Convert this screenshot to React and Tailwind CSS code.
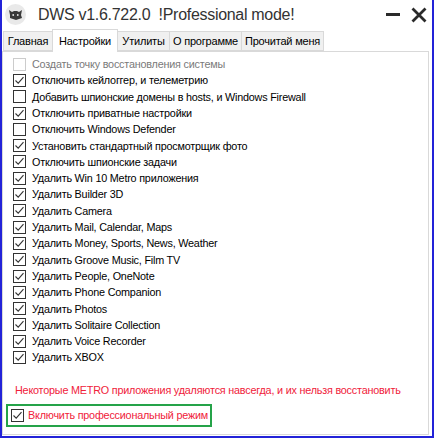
import React from 'react';

const items = [
  { label: 'Создать точку восстановления системы', checked: false, disabled: true },
  { label: 'Отключить кейлоггер, и телеметрию', checked: true },
  { label: 'Добавить шпионские домены в hosts, и Windows Firewall', checked: false },
  { label: 'Отключить приватные настройки', checked: true },
  { label: 'Отключить Windows Defender', checked: false },
  { label: 'Установить стандартный просмотрщик фото', checked: true },
  { label: 'Отключить шпионские задачи', checked: true },
  { label: 'Удалить Win 10 Metro приложения', checked: true },
  { label: 'Удалить Builder 3D', checked: true },
  { label: 'Удалить Camera', checked: true },
  { label: 'Удалить Mail, Calendar, Maps', checked: true },
  { label: 'Удалить Money, Sports, News, Weather', checked: true },
  { label: 'Удалить Groove Music, Film TV', checked: true },
  { label: 'Удалить People, OneNote', checked: true },
  { label: 'Удалить Phone Companion', checked: true },
  { label: 'Удалить Photos', checked: true },
  { label: 'Удалить Solitaire Collection', checked: true },
  { label: 'Удалить Voice Recorder', checked: true },
  { label: 'Удалить XBOX', checked: true },
];

const tabs = [
  { name: 'Главная', w: 'w-[50px]' },
  { name: 'Настройки', w: 'w-[66px]' },
  { name: 'Утилиты', w: 'w-[53px]' },
  { name: 'О программе', w: 'w-[73px]' },
  { name: 'Прочитай меня', w: 'w-[83px]' },
];

const Box = ({ checked, disabled }) => (
  <div
    className={`w-[13px] h-[13px] border flex items-center justify-center bg-white shrink-0 ${
      disabled ? 'border-[#cccccc]' : 'border-[#333333]'
    }`}
  >
    {checked && (
      <svg width="11" height="11" viewBox="0 0 11 11">
        <path d="M1.5 5.5 L4.2 8.2 L9.5 2.2" fill="none" stroke="#333" strokeWidth="1.1" />
      </svg>
    )}
  </div>
);

const Logo = () => (
  <div className="w-[21px] h-[21px] rounded-full bg-[#e9e9e9] flex items-center justify-center">
    <svg width="15" height="13" viewBox="0 0 15 13">
      <path d="M1 2 L4 4 L6 3 L9 3 L11 4 L14 2 L13 7 L14 10 L11 11 L8 12 L5 11 L2 10 L2 7 Z" fill="#3a3a3a" />
      <circle cx="5.2" cy="7" r="0.9" fill="#e9e9e9" />
      <circle cx="9.8" cy="7" r="0.9" fill="#e9e9e9" />
    </svg>
  </div>
);

export default function App() {
  return (
    <div
      className="w-[434px] h-[438px] bg-white border-x-2 border-b-2 border-[#2323d8] flex flex-col overflow-hidden"
      style={{ fontFamily: '"Liberation Sans", "DejaVu Sans", sans-serif' }}
    >
      {/* Заголовок */}
      <div className="h-[29px] flex items-center shrink-0">
        <div className="ml-[3px]">
          <Logo />
        </div>
        <div className="ml-[12px] text-[16px] tracking-[-0.3px] text-[#333333] leading-none whitespace-pre">
          DWS v1.6.722.0  !Professional mode!
        </div>
        <div className="ml-auto flex items-center gap-[11px] mr-[5px]">
          <div className="w-[14px] h-[3px] bg-[#2a2a2a]" />
          <svg width="16" height="16" viewBox="0 0 16 16">
            <path d="M1.5 1.5 L14.5 14.5 M14.5 1.5 L1.5 14.5" stroke="#2a2a2a" strokeWidth="2.8" />
          </svg>
        </div>
      </div>

      {/* Вкладки */}
      <div className="h-[22px] flex items-end shrink-0 pl-[1px] relative z-10 text-[11px] tracking-[-0.2px]">
        {tabs.map((t, i) =>
          i === 1 ? (
            <div
              key={t.name}
              className={`${t.w} h-[23px] bg-white border border-b-0 border-[#d9d9d9] text-black flex items-center justify-center -mb-[1px] -ml-[1px]`}
            >
              {t.name}
            </div>
          ) : (
            <div
              key={t.name}
              className={`${t.w} h-[20px] bg-[#f0f0f0] border border-[#d9d9d9] text-black flex items-center justify-center ${i === 0 ? '' : '-ml-[1px]'}`}
            >
              {t.name}
            </div>
          )
        )}
      </div>

      {/* Панель */}
      <div className="flex-1 border border-[#d9d9d9] bg-white mr-[3px] mb-[1px] flex flex-col text-[10.8px] tracking-[-0.2px]">
        <div className="flex flex-col pl-[10px] pt-[4px]">
          {items.map((it) => (
            <div key={it.label} className="h-[16.3px] flex items-center gap-[6px]">
              <Box checked={it.checked} disabled={it.disabled} />
              <span className={it.disabled ? 'text-[#7a7a7a]' : 'text-black'}>{it.label}</span>
            </div>
          ))}
        </div>
        <div className="mt-[17px] pl-[12px] text-[#f0213a] whitespace-nowrap leading-[14px]">
          Некоторые METRO приложения удаляются навсегда, и их нельзя восстановить
        </div>
        <div className="mt-[7px] ml-[3px] w-[206px] h-[23px] border-2 border-[#25a349] flex items-center pl-[3px] gap-[4px]">
          <Box checked />
          <span className="text-[#f0213a]">Включить профессиональный режим</span>
        </div>
      </div>
    </div>
  );
}
